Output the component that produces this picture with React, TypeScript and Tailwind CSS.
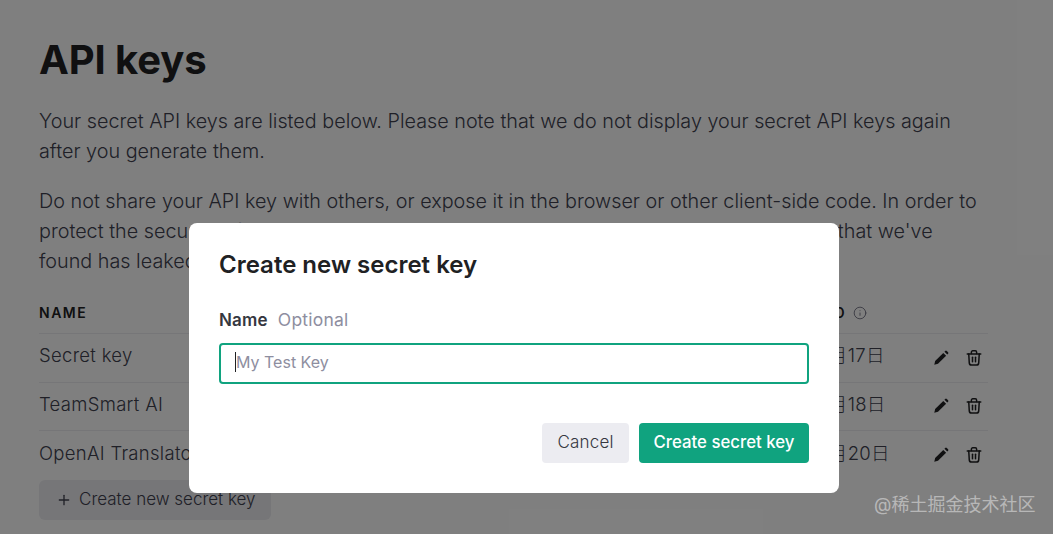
import { Info, Plus } from "lucide-react";

/* ── Key rows behind the dialog ── */
const keys = [
  { name: "Secret key", created: "2023年3月17日" },
  { name: "TeamSmart AI", created: "2023年3月18日" },
  { name: "OpenAI Translator", created: "2023年3月20日" },
];

/* ── Row action icons ── */
const PencilIcon = () => (
  <svg viewBox="0 0 24 24" className="h-[18px] w-[18px]" fill="currentColor">
    <path d="M3 21l1.2-5L15 5.2 18.8 9 8 19.8z" />
    <path d="M16.6 3.6l1-1a1.5 1.5 0 0 1 2.1 0l1.7 1.7a1.5 1.5 0 0 1 0 2.1l-1 1z" />
  </svg>
);

const TrashIcon = () => (
  <svg viewBox="0 0 24 24" className="h-[18px] w-[18px]" fill="none" stroke="currentColor" strokeWidth="2" strokeLinecap="round" strokeLinejoin="round">
    <path d="M3 6.5h18" />
    <path d="M8.5 6V4.2a1.8 1.8 0 0 1 1.8-1.8h3.4a1.8 1.8 0 0 1 1.8 1.8V6" />
    <path d="M5 6.5l.7 12a3 3 0 0 0 3 2.9h6.6a3 3 0 0 0 3-2.9l.7-12" />
    <path d="M10 11v6" />
    <path d="M14 11v6" />
  </svg>
);

export default function App() {
  return (
    <div className="relative h-[534px] w-[1053px] overflow-hidden bg-white font-['Inter','Noto_Sans_CJK_SC',sans-serif] text-[#40414f]">
      {/* ── Page under the overlay ── */}
      <main className="pl-[39px] pr-[65px] pt-[37px]">
        <h1 className="text-[40px] leading-[46px] font-bold tracking-[-0.1px] text-[#202123]">API keys</h1>
        <p className="mt-[23px] text-[19.8px] leading-[30px] font-light">
          Your secret API keys are listed below. Please note that we do not display your secret API keys again after you generate them.
        </p>
        <p className="mt-[20px] text-[19.8px] leading-[30px] font-light">
          Do not share your API key with others, or expose it in the browser or other client-side code. In order to protect the security of your account, OpenAI may also automatically rotate any API key that we've found has leaked publicly.
        </p>
        <div className="mt-[16px]">
          <div className="flex h-[42px] items-center border-b border-[#ececf1] text-[14px] font-semibold tracking-[1.5px] text-[#202123]">
            <span className="w-[300px]">NAME</span>
            <span className="w-[463px]">CREATED</span>
            <span className="flex items-center gap-[7px]">
              USED <Info className="h-[14px] w-[14px] text-[#6e6e80]" strokeWidth={1.5} />
            </span>
          </div>
          {keys.map((k, i) => (
            <div key={k.name} className={`flex h-[48.5px] items-center text-[18.5px] font-light tracking-[0.3px] ${i < 2 ? "border-b border-[#ececf1]" : ""}`}>
              <span className="mb-[3px] w-[300px]">{k.name}</span>
              <span className="mb-[3px] ml-[413px] w-[180px]">{k.created}</span>
              <span className="flex items-center gap-[15px] text-[#202123]">
                <PencilIcon />
                <TrashIcon />
              </span>
            </div>
          ))}
        </div>
        <button className="flex h-[40px] w-[232px] items-center gap-[7px] rounded-[6px] bg-[#ececf1] pl-[17px] text-[17px] font-light">
          <Plus className="h-[16px] w-[16px]" strokeWidth={2} />
          Create new secret key
        </button>
      </main>

      {/* ── Backdrop ── */}
      <div className="absolute inset-0 bg-black/50" />

      {/* ── Dialog ── */}
      <div className="absolute left-[189px] top-[223px] h-[270px] w-[650px] rounded-[8px] bg-white px-[30px] pt-[27px]">
        <h2 className="text-[24px] leading-[30px] font-semibold text-[#202123]">Create new secret key</h2>
        <div className="mt-[28px] flex gap-[10px] text-[17px] leading-[24px]">
          <span className="font-semibold tracking-[0.2px] text-[#353740]">Name</span>
          <span className="text-[17.5px] tracking-[0.2px] text-[#8e8ea0]">Optional</span>
        </div>
        <div className="mt-[11px] flex h-[41px] items-center rounded-[4px] border-2 border-[#10a37f] pb-[3px] pl-[14px] text-[16px] text-[#8e8ea0]">
          <span className="h-[20px] w-px bg-[#202123]" />
          My Test Key
        </div>
        <div className="mt-[39px] flex justify-end gap-[10px]">
          <button className="h-[40px] w-[87px] rounded-[4px] bg-[#ececf1] text-[17px] font-light tracking-[0.2px] text-[#353740]">Cancel</button>
          <button className="h-[40px] w-[170px] rounded-[4px] bg-[#10a37f] text-[16.8px] font-medium text-white">Create secret key</button>
        </div>
      </div>

      {/* ── Watermark ── */}
      <span className="absolute left-[874px] top-[493px] text-[18px] leading-[24px] text-white/45">@稀土掘金技术社区</span>
    </div>
  );
}
